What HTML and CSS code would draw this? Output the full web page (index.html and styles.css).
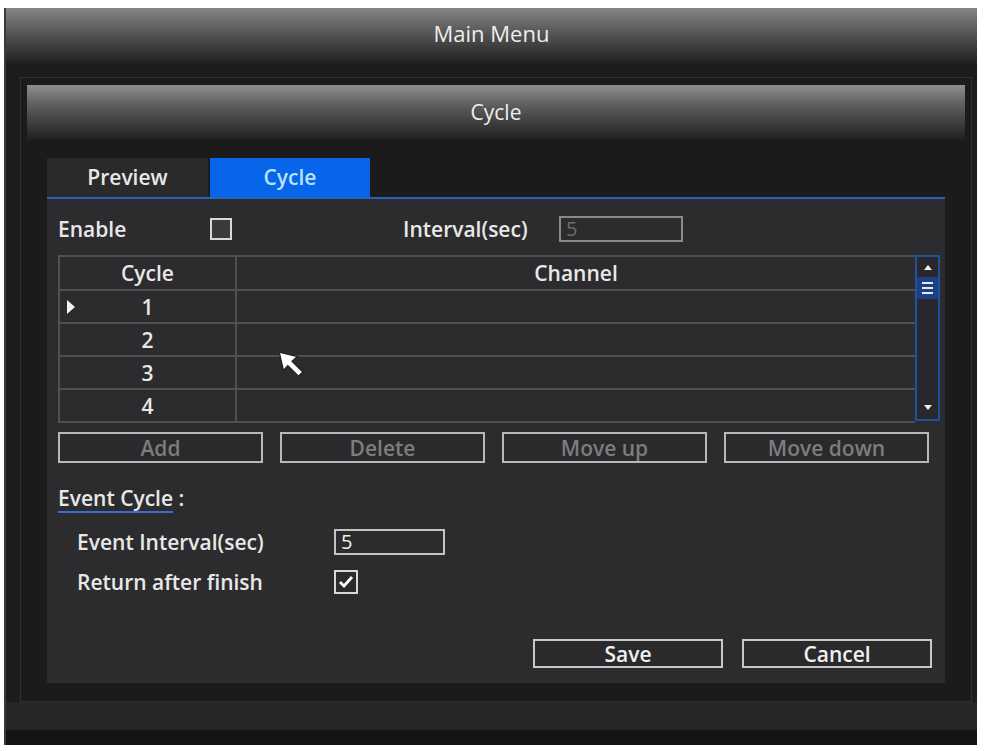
FILE: index.html
```html
<!DOCTYPE html>
<html lang="en">
<head>
    <meta charset="UTF-8">
    <title>Main Menu - Cycle</title>
    <link rel="stylesheet" href="styles.css">
</head>
<body>
    <div class="frame">
        <div class="topbar">Main Menu</div>

        <div class="dialog">
            <div class="dialog-head">Cycle</div>

            <div class="dialog-body">
                <div class="tabs">
                    <div class="tab">Preview</div>
                    <div class="tab active">Cycle</div>
                </div>

                <div class="panel">
                    <div class="row-enable">
                        <span class="lbl-enable">Enable</span>
                        <span class="check"></span>
                        <span class="lbl-interval">Interval(sec)</span>
                        <span class="field disabled">5</span>
                    </div>

                    <div class="table-wrap">
                        <table class="grid">
                            <tr>
                                <th class="col-cycle">Cycle</th>
                                <th>Channel</th>
                            </tr>
                            <tr>
                                <td class="col-cycle"><span class="sel-mark"></span>1</td>
                                <td></td>
                            </tr>
                            <tr>
                                <td class="col-cycle">2</td>
                                <td></td>
                            </tr>
                            <tr>
                                <td class="col-cycle">3</td>
                                <td></td>
                            </tr>
                            <tr>
                                <td class="col-cycle">4</td>
                                <td></td>
                            </tr>
                        </table>
                        <div class="scrollbar">
                            <span class="arrow-up"></span>
                            <span class="thumb"><i></i><i></i><i></i></span>
                            <span class="arrow-down"></span>
                        </div>
                    </div>

                    <div class="actions">
                        <button class="btn dim">Add</button>
                        <button class="btn dim">Delete</button>
                        <button class="btn dim">Move up</button>
                        <button class="btn dim">Move down</button>
                    </div>

                    <div class="event-title"><span class="link">Event Cycle</span> :</div>
                    <div class="event-row">
                        <span class="event-lbl">Event Interval(sec)</span>
                        <span class="field">5</span>
                    </div>
                    <div class="event-row">
                        <span class="event-lbl">Return after finish</span>
                        <span class="check on">
                            <svg width="16" height="14" viewBox="0 0 16 14"><path d="M2 7 L6 11 L14 2" fill="none" stroke="#fff" stroke-width="2.8"/></svg>
                        </span>
                    </div>

                    <div class="footer-btns">
                        <button class="btn">Save</button>
                        <button class="btn">Cancel</button>
                    </div>

                    <!-- mouse pointer on top of the grid -->
                    <svg class="pointer" width="30" height="30" viewBox="0 0 28 28">
                        <path d="M3 3 L20 7 L15 11.5 L25 21.5 L21 25.5 L11 15.5 L7 20 Z" fill="#fff" stroke="#222" stroke-width="1.2"/>
                    </svg>
                </div>
            </div>
        </div>

        <div class="frame-bottom"></div>
    </div>
</body>
</html>
```

FILE: styles.css
```css
body {
    margin: 0;
    background: #fff;
    font-family: "Open Sans", "Noto Sans", sans-serif;
}
.frame {
    margin: 8px 7px 6px 4px;
    height: 737px;
    background: #1c1c1d;
    border-left: 2px solid #3a3a3a;
    box-sizing: border-box;
    display: flex;
    flex-direction: column;
}
.topbar {
    height: 57px;
    background: linear-gradient(#858585, #555 45%, #1d1d1d);
    color: #eee;
    font-size: 22px;
    text-align: center;
    line-height: 50px;
    flex-shrink: 0;
}
.dialog {
    margin: 12px 5px 0 14px;
    height: 625px;
    border: 1px solid #303032;
    background: #1b1b1c;
    padding: 7px 6px 0 6px;
    box-sizing: border-box;
}
.dialog-head {
    height: 55px;
    background: linear-gradient(#8e8e8e, #5a5a5a 40%, #1f1f1f);
    color: #eee;
    font-size: 21px;
    text-align: center;
    line-height: 55px;
}
.dialog-body {
    padding: 18px 20px 0 20px;
    background: #1b1b1c;
}
.tabs {
    display: flex;
    height: 39px;
    gap: 2px;
}
.tab {
    width: 161px;
    background: #2a2a2b;
    color: #e8e8e8;
    font-size: 21px;
    font-weight: 600;
    text-align: center;
    line-height: 39px;
}
.tab.active {
    width: 160px;
    background: #0765ea;
    color: #b9e2ff;
}
.panel {
    position: relative;
    height: 486px;
    background: #2c2c2f;
    border-top: 2px solid #2a60c0;
    padding: 0 5px 0 11px;
    color: #e8e8e8;
    font-size: 21px;
    font-weight: 600;
    box-sizing: border-box;
}
.row-enable {
    display: flex;
    align-items: center;
    height: 28px;
    margin-top: 16px;
}
.lbl-enable {
    width: 152px;
}
.check {
    width: 22px;
    height: 22px;
    border: 2px solid #d8d8d8;
    background: #3a3a3c;
    box-sizing: border-box;
    display: inline-flex;
    align-items: center;
    justify-content: center;
}
.check.on {
    width: 24px;
    height: 24px;
    background: #2c2c2f;
}
.lbl-interval {
    margin-left: 171px;
    width: 156px;
}
.field {
    width: 124px;
    height: 26px;
    border: 2px solid #c4c4c4;
    box-sizing: border-box;
    line-height: 22px;
    padding-left: 5px;
    font-size: 20px;
    font-weight: normal;
    color: #f0f0f0;
}
.field.disabled {
    border-color: #8a8a8a;
    color: #6c6c6c;
}
.table-wrap {
    display: flex;
    margin-top: 12px;
}
.grid {
    width: 857px;
    border-collapse: collapse;
    border-left: 2px solid #505052;
}
.grid th, .grid td {
    height: 33px;
    padding: 0;
    border-top: 2px solid #505052;
    border-bottom: 2px solid #505052;
    font-weight: 600;
    text-align: center;
    box-sizing: border-box;
}
.grid th {
    height: 34px;
}
.grid .col-cycle {
    width: 177px;
    border-right: 2px solid #505052;
    position: relative;
}
.sel-mark {
    position: absolute;
    left: 7px;
    top: 9px;
    width: 0;
    height: 0;
    border-top: 7px solid transparent;
    border-bottom: 7px solid transparent;
    border-left: 8px solid #f4f4f4;
}
.scrollbar {
    width: 25px;
    height: 166px;
    border: 2px solid #2150a0;
    box-sizing: border-box;
    background: #28282c;
    position: relative;
}
.arrow-up, .arrow-down {
    position: absolute;
    left: 7px;
    width: 0;
    height: 0;
    border-left: 4px solid transparent;
    border-right: 4px solid transparent;
}
.arrow-up {
    top: 8px;
    border-bottom: 5px solid #f0f0f0;
}
.arrow-down {
    bottom: 9px;
    border-top: 5px solid #f0f0f0;
}
.thumb {
    position: absolute;
    left: 0;
    right: 0;
    top: 20px;
    height: 22px;
    background: #1c3f86;
    display: flex;
    flex-direction: column;
    align-items: center;
    justify-content: center;
    gap: 3px;
}
.thumb i {
    display: block;
    width: 11px;
    height: 2px;
    background: #e8e8e8;
}
.actions {
    display: grid;
    grid-template-columns: repeat(4, 205px);
    column-gap: 17px;
    margin-top: 9px;
}
.btn {
    height: 31px;
    background: #2a2a2d;
    border: 2px solid #c8c8c8;
    color: #f0f0f0;
    font-family: inherit;
    font-size: 21px;
    font-weight: 600;
    padding: 0;
    line-height: 26px;
}
.btn.dim {
    color: #7d7d7d;
    border-color: #b8b8b8;
}
.event-title {
    margin-top: 22px;
    height: 28px;
    line-height: 26px;
}
.event-title .link {
    display: inline-block;
    border-bottom: 2px solid #3470d0;
}
.event-row {
    display: flex;
    align-items: center;
    height: 28px;
    margin-top: 15px;
    padding-left: 19px;
}
.event-row + .event-row {
    margin-top: 12px;
}
.event-lbl {
    width: 257px;
}
.event-row .field {
    width: 111px;
}
.footer-btns {
    display: flex;
    justify-content: flex-end;
    gap: 19px;
    margin-top: 43px;
    padding-right: 8px;
}
.footer-btns .btn {
    width: 190px;
    height: 29px;
    line-height: 24px;
}
.pointer {
    position: absolute;
    left: 229px;
    top: 150px;
}
.frame-bottom {
    flex: 1;
    background: linear-gradient(#262628 0, #262628 65%, #141416 65%);
}
```
